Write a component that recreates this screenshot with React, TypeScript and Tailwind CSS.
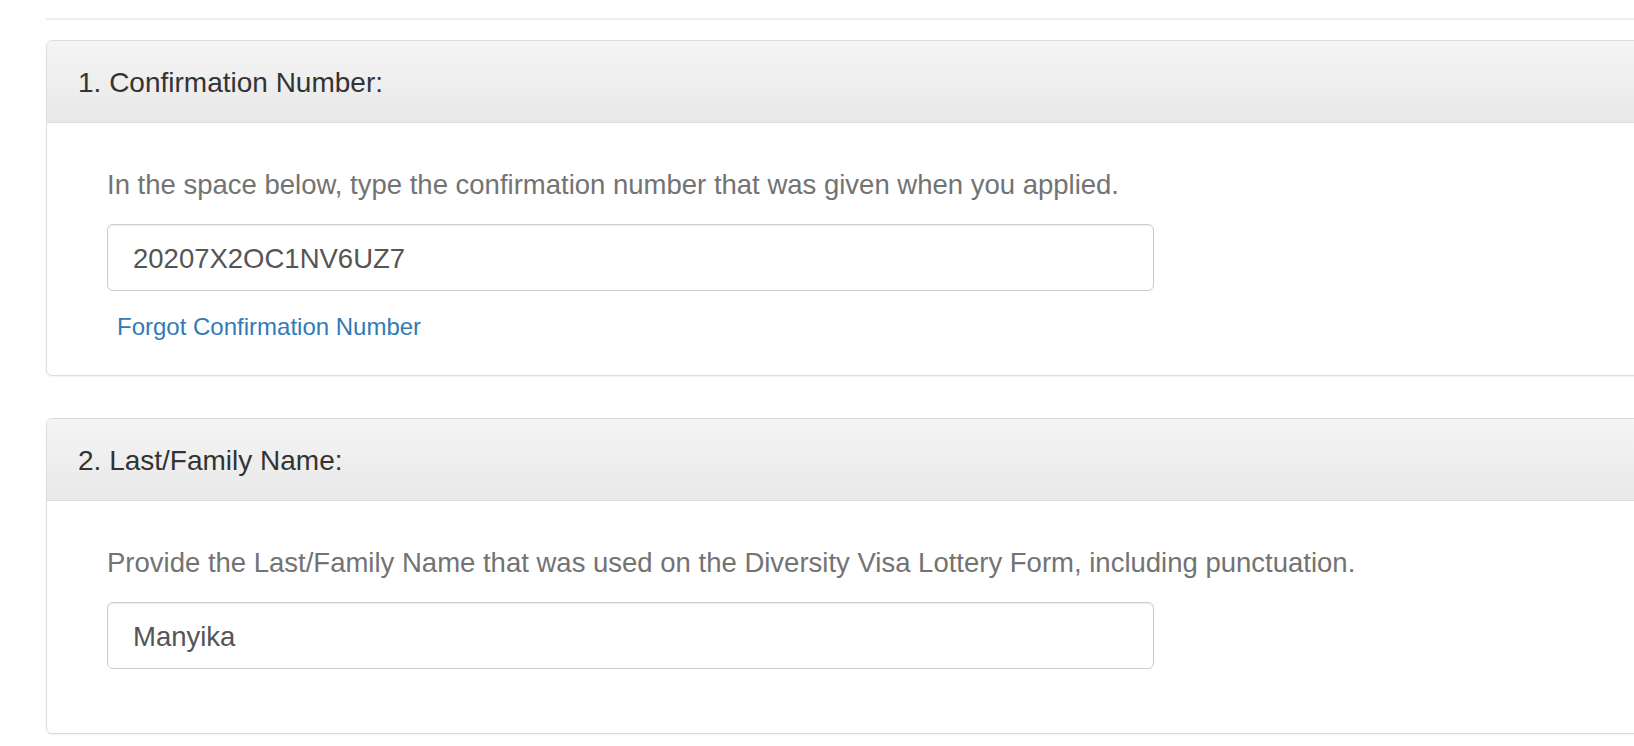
import React from 'react';

interface Field {
  id: string;
  title: string;
  help: string;
  value: string;
  link?: string;
}

const fields: Field[] = [
  {
    id: 'confirmation',
    title: '1. Confirmation Number:',
    help: 'In the space below, type the confirmation number that was given when you applied.',
    value: '20207X2OC1NV6UZ7',
    link: 'Forgot Confirmation Number',
  },
  {
    id: 'lastname',
    title: '2. Last/Family Name:',
    help: 'Provide the Last/Family Name that was used on the Diversity Visa Lottery Form, including punctuation.',
    value: 'Manyika',
  },
];

function Panel({ field }: { field: Field }) {
  return (
    <div className="w-[1640px] border border-[#dddddd] rounded-[6px] bg-white shadow-[0_1px_2px_rgba(0,0,0,0.06)] overflow-hidden">
      <div className="h-[82px] flex items-center pl-[31px] pt-[3px] border-b border-[#dddddd] bg-gradient-to-b from-[#f5f5f5] to-[#e8e8e8]">
        <h3 className="text-[28px] text-[#333333]">{field.title}</h3>
      </div>
      <div className={`pt-[43px] px-[60px] ${field.link ? 'pb-[31px]' : 'pb-[64px]'}`}>
        <p className="text-[27.5px] leading-[38px] text-[#737373] mb-[20px]">{field.help}</p>
        <input
          type="text"
          readOnly
          value={field.value}
          className="block w-[1047px] h-[67px] pl-[25px] pr-[24px] pt-[2px] border border-[#cccccc] rounded-[6px] text-[27.5px] text-[#555555] bg-white shadow-[inset_0_1px_1px_rgba(0,0,0,0.075)] outline-none"
        />
        {field.link && (
          <a href="#" className="block mt-[19px] ml-[10px] text-[24px] leading-[34px] text-[#337ab7]">
            {field.link}
          </a>
        )}
      </div>
    </div>
  );
}

export default function App() {
  return (
    <div className="w-full h-[746px] overflow-hidden bg-white pl-[46px] pt-[18px] font-['Liberation_Sans',Arial,sans-serif]">
      <div className="h-[2px] w-[1640px] bg-[#eeeeee] mb-[20px]" />
      <div className="space-y-[42px]">
        {fields.map((f) => (
          <Panel key={f.id} field={f} />
        ))}
      </div>
    </div>
  );
}
